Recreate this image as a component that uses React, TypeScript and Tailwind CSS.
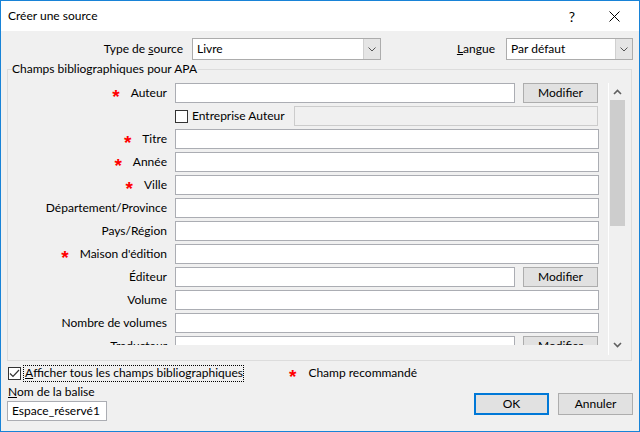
import React from "react";

const FONT = { fontFamily: 'Lato, "Noto Sans", sans-serif' } as React.CSSProperties;

function Star({ className = "" }: { className?: string }) {
  return (
    <span
      className={`text-[#ff0000] font-bold text-[19px] leading-none translate-y-[3px] ${className}`}
      style={{ fontFamily: '"Liberation Sans", Arial, sans-serif' }}
    >
      *
    </span>
  );
}

function Chevron({ up = false }: { up?: boolean }) {
  return (
    <svg width="9" height="6" viewBox="0 0 9 6" className="block">
      <path
        d={up ? "M1 5 L4.5 1.5 L8 5" : "M1 1 L4.5 4.5 L8 1"}
        fill="none"
        stroke="#606060"
        strokeWidth="1.6"
      />
    </svg>
  );
}

function Select({ value, width }: { value: string; width: string }) {
  return (
    <div className={`h-[22px] ${width} border border-[#acacac] bg-white flex items-stretch`}>
      <div className="flex-1 pl-[4px] flex items-center text-[12px] text-black">{value}</div>
      <div className="w-[17px] bg-[#e5e5e5] border-l border-[#d0d0d0] flex items-center justify-center">
        <svg width="8" height="5" viewBox="0 0 8 5">
          <path d="M0.5 0.5 L4 4 L7.5 0.5" fill="none" stroke="#555" strokeWidth="1" />
        </svg>
      </div>
    </div>
  );
}

function Button({ children, className = "" }: { children: React.ReactNode; className?: string }) {
  return (
    <div
      className={`w-[75px] h-[20px] bg-[#e1e1e1] border border-[#adadad] flex items-center justify-center text-[12px] text-black ${className}`}
    >
      {children}
    </div>
  );
}

type Row = { label: string; star?: boolean; btn?: boolean; company?: boolean };

const rows: Row[] = [
  { label: "Auteur", star: true, btn: true },
  { label: "", company: true },
  { label: "Titre", star: true },
  { label: "Année", star: true },
  { label: "Ville", star: true },
  { label: "Département/Province" },
  { label: "Pays/Région" },
  { label: "Maison d'édition", star: true },
  { label: "Éditeur", btn: true },
  { label: "Volume" },
  { label: "Nombre de volumes" },
  { label: "Traducteur", btn: true },
];

export default function App() {
  return (
    <div
      className="w-[640px] h-[432px] border border-[#1883d7] bg-[#f0f0f0] flex flex-col text-[12px] text-black overflow-hidden"
      style={FONT}
    >
      {/* Title bar */}
      <div className="h-[30px] bg-white flex items-center pl-[7px] pr-[4px] shrink-0">
        <div className="text-[12px] text-black">Créer une source</div>
        <div className="ml-auto flex h-full">
          <div className="w-[42px] h-full flex items-center justify-center text-[14px] text-black">?</div>
          <div className="w-[42px] h-full flex items-center justify-center">
            <svg width="11" height="11" viewBox="0 0 11 11">
              <path d="M0.5 0.5 L10.5 10.5 M10.5 0.5 L0.5 10.5" stroke="#000" strokeWidth="1" />
            </svg>
          </div>
        </div>
      </div>

      {/* Source type row */}
      <div className="flex items-center mt-[7px] h-[22px]">
        <div className="w-[182px] text-right">
          Type de <u>s</u>ource
        </div>
        <div className="ml-[9px]">
          <Select value="Livre" width="w-[189px]" />
        </div>
        <div className="w-[114px] text-right">
          <u>L</u>angue
        </div>
        <div className="ml-[11px]">
          <Select value="Par défaut" width="w-[127px]" />
        </div>
      </div>

      {/* Group box */}
      <div className="relative ml-[6px] mt-[9px] w-[625px] h-[292px] border border-[#dcdcdc] pt-[13px] shrink-0">
        <div className="absolute left-[4px] top-[-9px] bg-[#f0f0f0] pr-[1px] leading-[16px]">
          Champs bibliographiques pour APA
        </div>
        <div className="flex h-[272px]">
          <div className="w-[600px] flex flex-col">
            <div className="h-[262px] overflow-hidden flex flex-col gap-[3px]">
              {rows.map((r, i) =>
                r.company ? (
                  <div key={i} className="flex items-center h-[20px] shrink-0">
                    <div className="w-[159px]" />
                    <div className="ml-[8px] w-[13px] h-[13px] border border-[#333333] bg-white" />
                    <div className="ml-[4px] w-[102px] whitespace-nowrap">Entreprise Auteur</div>
                    <div className="w-[304px] h-[20px] border border-[#cccccc] bg-[#f0f0f0]" />
                  </div>
                ) : (
                  <div key={i} className="flex items-center h-[20px] shrink-0">
                    <div className="w-[159px] flex items-center justify-end whitespace-nowrap">
                      {r.star && <Star className="mr-[11px]" />}
                      <span>{r.label}</span>
                    </div>
                    {r.btn ? (
                      <>
                        <div className="ml-[8px] w-[340px] h-[20px] border border-[#abadb3] bg-white" />
                        <Button className="ml-[8px]">Modifier</Button>
                      </>
                    ) : (
                      <div className="ml-[8px] w-[424px] h-[20px] border border-[#abadb3] bg-white" />
                    )}
                  </div>
                )
              )}
            </div>
          </div>
          {/* Scrollbar */}
          <div className="w-[17px] h-[272px] border-l border-white flex flex-col items-center">
            <div className="h-[17px] flex items-center justify-center">
              <Chevron up />
            </div>
            <div className="w-[15px] h-[126px] bg-[#cdcdcd]" />
            <div className="flex-1" />
            <div className="h-[17px] flex items-center justify-center mb-[2px]">
              <Chevron />
            </div>
          </div>
        </div>
      </div>

      {/* Bottom */}
      <div className="flex">
        <div className="flex flex-col">
          <div className="flex items-center mt-[4px] h-[16px] pl-[7px]">
            <div className="w-[13px] h-[13px] border border-[#333333] bg-white flex items-center justify-center">
              <svg width="11" height="9" viewBox="0 0 11 9">
                <path d="M1 4.5 L4 7.5 L10 1" fill="none" stroke="#333" strokeWidth="1.2" />
              </svg>
            </div>
            <div className="ml-[2px] w-[221px] h-[17px] border border-dotted border-black pl-[1px] flex items-center whitespace-nowrap">
              <u>A</u>fficher tous les champs bibliographiques
            </div>
            <div className="ml-[45px] flex items-center">
              <Star />
              <span className="ml-[12px]">Champ recommandé</span>
            </div>
          </div>
          <div className="mt-[3px] h-[16px] leading-[16px] pl-[7px]">
            <u>N</u>om de la balise
          </div>
          <div className="mt-[1px] ml-[6px] w-[100px] h-[20px] border border-[#abadb3] bg-white flex items-center pl-[4px]">
            Espace_réservé1
          </div>
        </div>
        <div className="ml-auto flex gap-[9px] pt-[32px] pr-[6px]">
          <div className="w-[75px] h-[22px] bg-[#e1e1e1] border-2 border-[#0078d7] flex items-center justify-center">
            OK
          </div>
          <div className="w-[75px] h-[22px] bg-[#e1e1e1] border border-[#adadad] flex items-center justify-center">
            Annuler
          </div>
        </div>
      </div>
    </div>
  );
}
